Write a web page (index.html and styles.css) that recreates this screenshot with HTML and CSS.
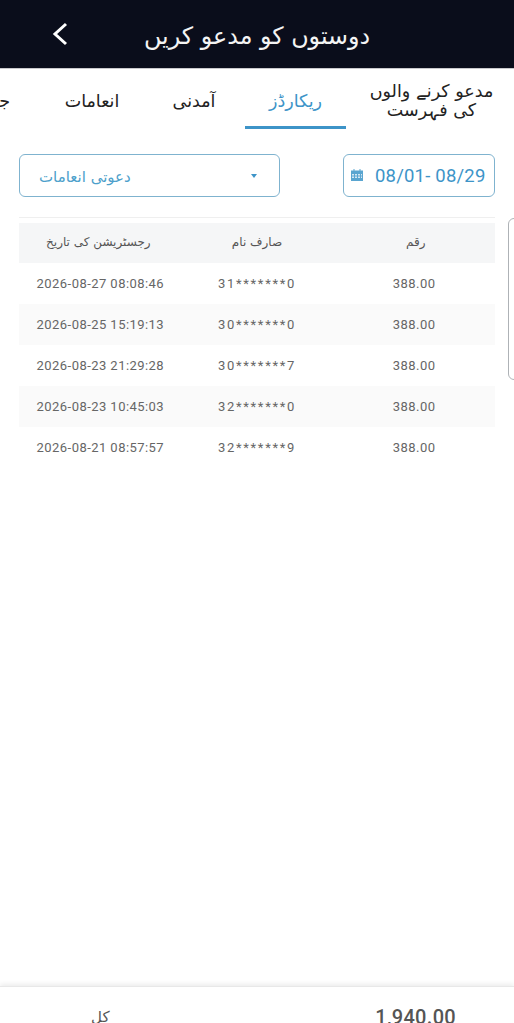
FILE: index.html
```html
<!DOCTYPE html>
<html lang="ur" dir="rtl">
<head>
<meta charset="utf-8">
<title>دوستوں کو مدعو کریں</title>
<link rel="stylesheet" href="styles.css">
</head>
<body>
<div class="page">
  <header class="topbar">
    <h1 class="title">دوستوں کو مدعو کریں</h1>
    <svg class="back" viewBox="0 0 18 26" width="18" height="26" aria-hidden="true"><path d="M15 3 4 13l11 10" fill="none" stroke="#fff" stroke-width="3"/></svg>
  </header>
  <nav class="tabs">
    <div class="tab tab-wide">مدعو کرنے والوں<br>کی فہرست</div>
    <div class="tab tab-active">ریکارڈز</div>
    <div class="tab">آمدنی</div>
    <div class="tab">انعامات</div>
    <div class="tab">جیتیں</div>
  </nav>
  <section class="filters">
    <div class="date-box" dir="ltr">
      <svg class="cal" viewBox="0 0 14 14" width="14" height="14" aria-hidden="true">
        <path fill="#5aa5d0" d="M1 2.500h2.500V1h1v1.500h5V1h1v1.500H13V13H1z"/>
        <path fill="#d5e8f3" d="M2 6h2v1.500H2zm3 0h2v1.500H5zm3 0h2v1.500H8zm3 0h1v1.500h-1zM2 8.500h2V10H2zm3 0h2V10H5zm3 0h2V10H8zm3 0h1V10h-1z"/>
      </svg>
      <span>08/01- 08/29</span>
    </div>
    <div class="select-box" dir="ltr">
      <span class="caret"></span>
      <span class="select-text" dir="rtl">دعوتی انعامات</span>
    </div>
  </section>
  <div class="table-wrap">
    <table class="records">
      <thead>
        <tr><th>رقم</th><th>صارف نام</th><th>رجسٹریشن کی تاریخ</th></tr>
      </thead>
      <tbody dir="ltr">
        <tr><td class="amount">388.00</td><td class="mask">31*******0</td><td class="time">2026-08-27 08:08:46</td></tr>
        <tr><td class="amount">388.00</td><td class="mask">30*******0</td><td class="time">2026-08-25 15:19:13</td></tr>
        <tr><td class="amount">388.00</td><td class="mask">30*******7</td><td class="time">2026-08-23 21:29:28</td></tr>
        <tr><td class="amount">388.00</td><td class="mask">32*******0</td><td class="time">2026-08-23 10:45:03</td></tr>
        <tr><td class="amount">388.00</td><td class="mask">32*******9</td><td class="time">2026-08-21 08:57:57</td></tr>
      </tbody>
    </table>
    <div class="side-handle"></div>
  </div>
  <footer class="totals">
    <span class="total-amount">1,940.00</span>
    <span></span>
    <span class="total-label">کل</span>
  </footer>
</div>
</body>
</html>
```

FILE: styles.css
```css
* { box-sizing: border-box; }
html, body { margin: 0; padding: 0; height: 100%; background: #fff; overflow: hidden; }
body { font-family: Roboto, "DejaVu Sans", sans-serif; }
.page { display: flex; flex-direction: column; height: 1023px; width: 514px; overflow: hidden; }

.topbar { flex: none; position: relative; height: 69px; background: #0a0d1b; border-bottom: 1px solid #c9c9cc; display: flex; justify-content: center; align-items: center; padding-top: 6px; }
.title { margin: 0; color: #f4f4f4; font: 400 23.800px/1 "DejaVu Sans", sans-serif; }
.back { position: absolute; left: 51px; top: 21px; }

.tabs { flex: none; display: flex; height: 60px; overflow: hidden; }
.tab { flex: none; width: 102px; height: 60px; display: flex; align-items: center; justify-content: center; text-align: center; color: #222; font: 400 17.500px/19px "DejaVu Sans", sans-serif; white-space: nowrap; padding-top: 5px; }
.tab-wide { width: 168px; display: block; padding-top: 13px; padding-left: 3px; }
.tab-active { width: 101px; color: #3d94c8; border-bottom: 3px solid #3d94c8; padding-top: 8px; }

.filters { flex: none; display: flex; justify-content: space-between; padding: 25px 19px 0; }
.date-box, .select-box { height: 43px; border: 1.500px solid #7fb3cf; border-radius: 6px; display: flex; align-items: center; color: #3d94c8; }
.date-box { width: 152px; padding-left: 6px; gap: 11px; font-size: 18.500px; letter-spacing: .2px; white-space: nowrap; }
.cal { flex: none; margin-top: -1px; }
.select-box { width: 261px; padding: 0 22px 0 19px; justify-content: space-between; flex-direction: row-reverse; }
.select-text { font: 400 15px/1 "DejaVu Sans", sans-serif; color: #4d9fcb; padding-top: 4px; }
.caret { width: 0; height: 0; border-left: 3.500px solid transparent; border-right: 3.500px solid transparent; border-top: 4px solid #3d94c8; }

.table-wrap { flex: 1; position: relative; margin-top: 20px; padding: 0 19px; }
.table-wrap::before { content: ""; display: block; height: 5px; border-top: 1px solid #efefef; }
.records { width: 476px; table-layout: fixed; border-collapse: collapse; }
.records th { height: 40px; background: #f5f6f7; color: #555; font: 400 12px/1 "DejaVu Sans", sans-serif; text-align: center; padding: 0 0 3px; }
.records td { height: 41px; text-align: center; color: #666; font-size: 13px; letter-spacing: .45px; padding: 0; }
.records .amount { padding-right: 3px; }
.records .mask { letter-spacing: 1.700px; }
.records .time { padding-left: 4px; }
.records tbody tr:nth-child(even) td { background: #fafafa; }
.side-handle { position: absolute; left: 508px; top: 1px; width: 12px; height: 162px; border: 1px solid #aeb2b6; border-radius: 6px; }

.totals { flex: none; height: 37px; display: grid; grid-template-columns: repeat(3, 1fr); padding: 20px 19px 0; border-top: 1px solid #e8e8e8; box-shadow: 0 -2px 5px rgba(0,0,0,.08); background: #fff; color: #555; overflow: hidden; }
.total-amount { text-align: center; font-size: 20px; font-weight: 500; letter-spacing: .3px; line-height: 20px; direction: ltr; }
.total-label { text-align: center; font: 400 15px/20px "DejaVu Sans", sans-serif; padding-left: 4px; }
```
